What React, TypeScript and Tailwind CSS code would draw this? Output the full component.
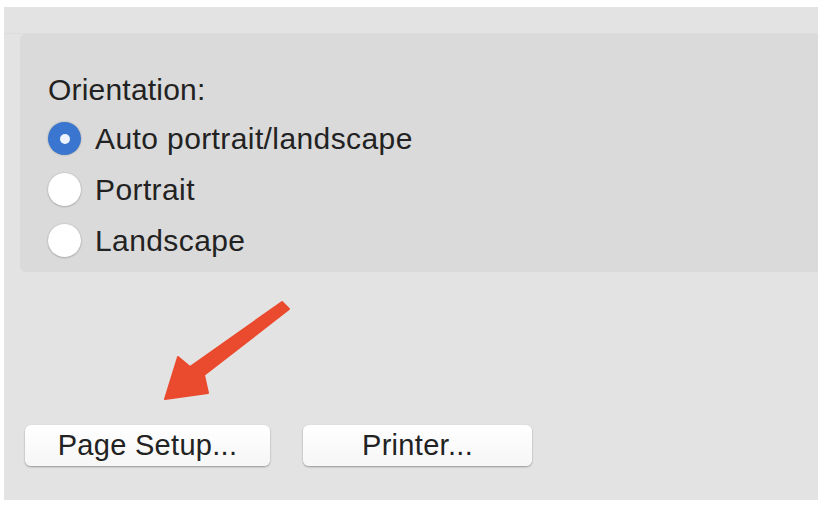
const Radio = ({ checked, label }: { checked?: boolean; label: string }) => (
  <div className="flex h-[51px] items-center">
    {checked ? (
      <span className="flex h-[33px] w-[33px] items-center justify-center rounded-full bg-[#3a76cf] shadow-[0_0_2px_rgba(0,0,0,0.3)]">
        <span className="h-[10px] w-[10px] rounded-full bg-[#eef4ff]" />
      </span>
    ) : (
      <span className="h-[33px] w-[33px] rounded-full bg-white shadow-[0_0.5px_2px_rgba(0,0,0,0.35)]" />
    )}
    <span className="ml-[14px] tracking-[0.4px]">{label}</span>
  </div>
);

const Button = ({ label, width }: { label: string; width: string }) => (
  <div
    className={`flex h-[41px] ${width} items-center justify-center rounded-[6px] bg-gradient-to-b from-white to-[#f6f6f6] text-[29px] tracking-[0.3px] text-[#222] shadow-[0_1px_2px_rgba(0,0,0,0.35)]`}
  >
    {label}
  </div>
);

export default function App() {
  return (
    <div className="relative h-[505px] w-[824px] bg-white pb-[5px] pl-[4px] pr-[6px] pt-[7px] font-['Liberation_Sans',Arial,sans-serif] text-[#222]">
      <div className="flex h-full flex-col bg-[#e3e3e3]">
        <div className="h-[27px] border-b border-[#dcdcdc]" />
        <div className="ml-[16px] h-[238px] rounded-l-[6px] bg-[#dadada] pl-[28px] pt-[38px] text-[30px] leading-[35px]">
          <div className="h-[35px] tracking-[0.2px]">Orientation:</div>
          <div className="mt-[6px]">
            <Radio checked label="Auto portrait/landscape" />
            <Radio label="Portrait" />
            <Radio label="Landscape" />
          </div>
        </div>
        <div className="ml-[21px] mt-[153px] flex gap-[33px]">
          <Button label="Page Setup..." width="w-[245px]" />
          <Button label="Printer..." width="w-[229px]" />
        </div>
      </div>

      <svg className="absolute left-0 top-0" width="824" height="505" viewBox="0 0 824 505">
        <path
          d="M282 302 L289 309 L204 375 L208 393 L165 399 L178 357 L190 367 Z"
          fill="#ea4a2e"
          stroke="#ea4a2e"
          strokeWidth="2"
          strokeLinejoin="round"
        />
      </svg>
    </div>
  );
}
